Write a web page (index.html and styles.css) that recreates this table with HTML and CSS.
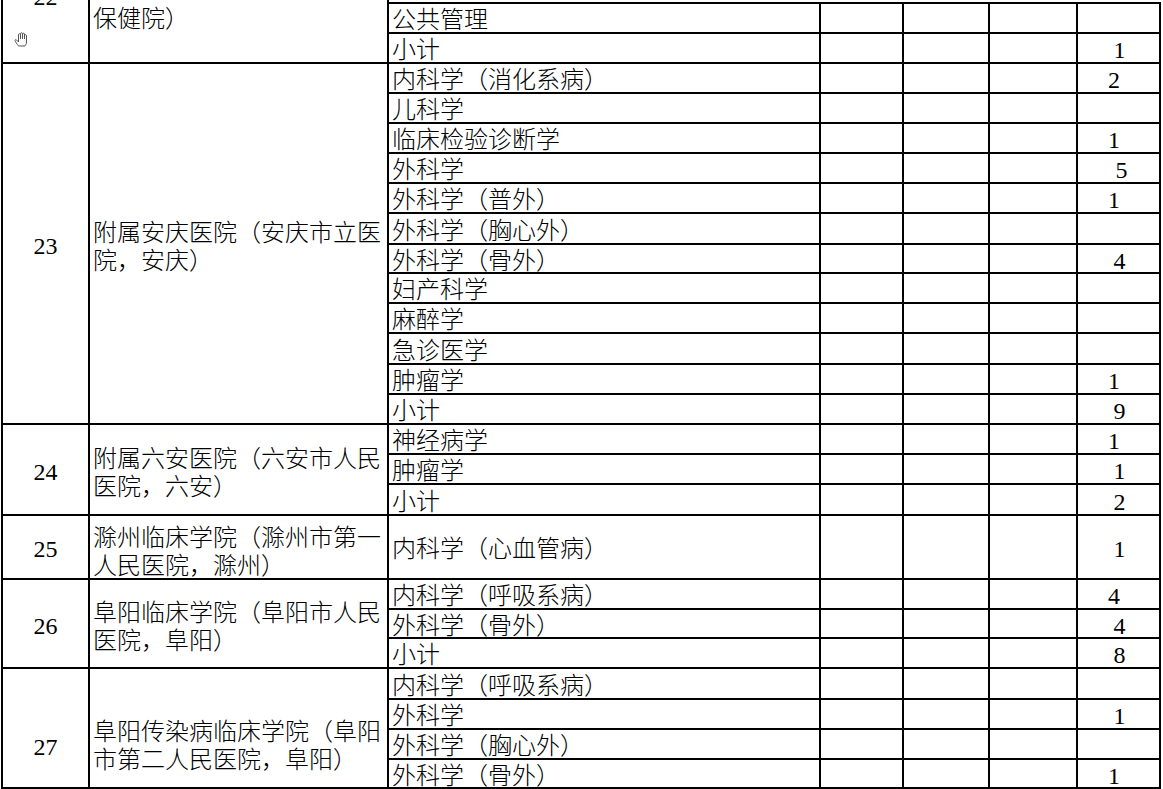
FILE: index.html
```html
<!DOCTYPE html>
<html lang="zh-CN">
<head>
<meta charset="utf-8">
<title>附属医院招生计划</title>
<link rel="stylesheet" href="styles.css">
</head>
<body>
<div class="sheet">
  <!-- 22 -->
  <div class="c idx g22">
    <div class="cut"><span>22</span></div>
    <svg class="hand" viewBox="0 0 16 16" aria-hidden="true"><path d="M4.5 15 C3 13 1.5 11 1 9.5 C0.8 8.7 1.8 8.3 2.4 8.9 L4.5 11 V3.5 C4.5 2.5 6.5 2.5 6.5 3.5 V8 V2.5 C6.5 1.5 8.5 1.5 8.5 2.5 V8 V3 C8.5 2 10.5 2 10.5 3 V8 V4.5 C10.5 3.5 12.5 3.5 12.5 4.5 V11 C12.5 13 11.5 14 11 15 Z"/></svg>
  </div>
  <div class="c name g22n span2">保健院）</div>
  <div class="c t top">公共管理</div><div class="c top"></div><div class="c top"></div><div class="c top"></div><div class="c top"></div>
  <div class="c t">小计</div><div class="c"></div><div class="c"></div><div class="c"></div><div class="c num">1</div>

  <!-- 23 -->
  <div class="c idx span12">23</div>
  <div class="c name span12 g23n">附属安庆医院（安庆市立医院，安庆）</div>
  <div class="c t">内科学（消化系病）</div><div class="c"></div><div class="c"></div><div class="c"></div><div class="c num l">2</div>
  <div class="c t">儿科学</div><div class="c"></div><div class="c"></div><div class="c"></div><div class="c num"></div>
  <div class="c t">临床检验诊断学</div><div class="c"></div><div class="c"></div><div class="c"></div><div class="c num l">1</div>
  <div class="c t">外科学</div><div class="c"></div><div class="c"></div><div class="c"></div><div class="c num r">5</div>
  <div class="c t">外科学（普外）</div><div class="c"></div><div class="c"></div><div class="c"></div><div class="c num l">1</div>
  <div class="c t">外科学（胸心外）</div><div class="c"></div><div class="c"></div><div class="c"></div><div class="c num"></div>
  <div class="c t">外科学（骨外）</div><div class="c"></div><div class="c"></div><div class="c"></div><div class="c num">4</div>
  <div class="c t">妇产科学</div><div class="c"></div><div class="c"></div><div class="c"></div><div class="c num"></div>
  <div class="c t">麻醉学</div><div class="c"></div><div class="c"></div><div class="c"></div><div class="c num"></div>
  <div class="c t">急诊医学</div><div class="c"></div><div class="c"></div><div class="c"></div><div class="c num"></div>
  <div class="c t">肿瘤学</div><div class="c"></div><div class="c"></div><div class="c"></div><div class="c num l">1</div>
  <div class="c t">小计</div><div class="c"></div><div class="c"></div><div class="c"></div><div class="c num">9</div>

  <!-- 24 -->
  <div class="c idx span3">24</div>
  <div class="c name span3">附属六安医院（六安市人民医院，六安）</div>
  <div class="c t">神经病学</div><div class="c"></div><div class="c"></div><div class="c"></div><div class="c num l">1</div>
  <div class="c t">肿瘤学</div><div class="c"></div><div class="c"></div><div class="c"></div><div class="c num">1</div>
  <div class="c t">小计</div><div class="c"></div><div class="c"></div><div class="c"></div><div class="c num">2</div>

  <!-- 25 -->
  <div class="c idx">25</div>
  <div class="c name g25n">滁州临床学院（滁州市第一人民医院，滁州）</div>
  <div class="c t">内科学（心血管病）</div><div class="c"></div><div class="c"></div><div class="c"></div><div class="c num">1</div>

  <!-- 26 -->
  <div class="c idx span3">26</div>
  <div class="c name span3">阜阳临床学院（阜阳市人民医院，阜阳）</div>
  <div class="c t">内科学（呼吸系病）</div><div class="c"></div><div class="c"></div><div class="c"></div><div class="c num l">4</div>
  <div class="c t">外科学（骨外）</div><div class="c"></div><div class="c"></div><div class="c"></div><div class="c num">4</div>
  <div class="c t">小计</div><div class="c"></div><div class="c"></div><div class="c"></div><div class="c num">8</div>

  <!-- 27 -->
  <div class="c idx span4 g27">27</div>
  <div class="c name span4 g27n">阜阳传染病临床学院（阜阳市第二人民医院，阜阳）</div>
  <div class="c t">内科学（呼吸系病）</div><div class="c"></div><div class="c"></div><div class="c"></div><div class="c num"></div>
  <div class="c t">外科学</div><div class="c"></div><div class="c"></div><div class="c"></div><div class="c num">1</div>
  <div class="c t">外科学（胸心外）</div><div class="c"></div><div class="c"></div><div class="c"></div><div class="c num"></div>
  <div class="c t">外科学（骨外）</div><div class="c"></div><div class="c"></div><div class="c"></div><div class="c num l">1</div>
</div>
</body>
</html>
```

FILE: styles.css
```css
html, body {
  margin: 0;
  padding: 0;
  background: #fff;
}

body {
  font-family: "Liberation Serif", "Noto Sans CJK SC", serif;
  color: #000;
  overflow: hidden;
  height: 789px;
}

.sheet {
  display: grid;
  grid-template-columns: 89px 299px 432px 83px 86px 88px 83px;
  grid-template-rows: 34px 30px 30px 30px 30px 30px 30px 31px 29px 30px 30px 31px 30px 30px 30px 30px 31px 64px 30px 29px 30px 31px 30px 30px 29px;
  margin-left: 1px;
  width: max-content;
}

.c {
  box-sizing: border-box;
  border-right: 2px solid #000;
  border-bottom: 2px solid #000;
  display: flex;
  align-items: center;
  min-width: 0;
  font-size: 24px;
}

.top {
  margin-top: 2px;
  border-top: 2px solid #000;
}

.span2 { grid-row: span 2; }
.span3 { grid-row: span 3; }
.span4 { grid-row: span 4; }
.span12 { grid-row: span 12; }

/* column 1: serial number */
.idx {
  position: relative;
  border-left: 2px solid #000;
  justify-content: center;
  line-height: 24px;
  padding-top: 4px;
}

.g22 {
  grid-row: span 2;
  align-items: flex-start;
  padding-top: 0;
}

.cut {
  height: 9px;
  overflow: hidden;
  display: flex;
  align-items: flex-end;
}

.hand {
  position: absolute;
  left: 11px;
  top: 31px;
  width: 16px;
  height: 16px;
  fill: #fff;
  stroke: #555;
  stroke-width: 1;
  stroke-linejoin: round;
}

/* column 2: hospital name */
.name {
  padding-left: 3px;
  padding-top: 6px;
  line-height: 28px;
  font-weight: 300;
}

.g22n {
  align-items: flex-start;
  padding-top: 5px;
}

.g25n { padding-top: 9px; }

.g27 { padding-top: 38px; }
.g27n { padding-top: 36px; }

/* column 3: speciality */
.t {
  padding-left: 3px;
  padding-top: 4px;
  line-height: 24px;
  font-weight: 300;
  white-space: nowrap;
}

/* last column: counts */
.num {
  justify-content: center;
  line-height: 24px;
  padding-top: 4px;
  padding-left: 2px;
}

.num.l {
  padding-left: 0;
  padding-right: 9px;
}

.num.r {
  padding-left: 6px;
}
```
